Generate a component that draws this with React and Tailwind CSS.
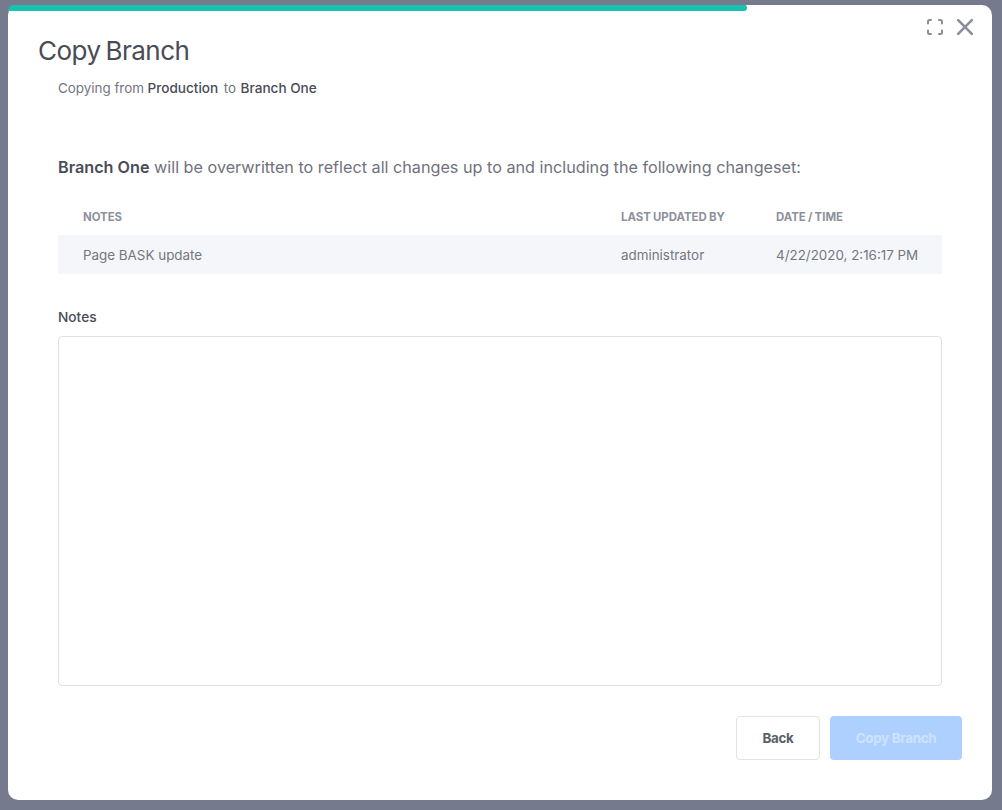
import React from "react";

function ExpandIcon() {
  return (
    <svg width="16" height="16" viewBox="0 0 16 16" fill="none" stroke="#8a8e99" strokeWidth="2" strokeLinecap="round">
      <path d="M1 4.5V2.5A1.5 1.5 0 0 1 2.5 1H4" />
      <path d="M12 1H13.5A1.5 1.5 0 0 1 15 2.5V4.5" />
      <path d="M15 11.5V13.5A1.5 1.5 0 0 1 13.5 15H12" />
      <path d="M4 15H2.5A1.5 1.5 0 0 1 1 13.5V11.5" />
    </svg>
  );
}

function CloseIcon() {
  return (
    <svg width="16" height="16" viewBox="0 0 16 16" fill="none" stroke="#8a8e99" strokeWidth="2.6" strokeLinecap="round">
      <path d="M1.2 1.2L14.8 14.8M14.8 1.2L1.2 14.8" />
    </svg>
  );
}

export default function App() {
  return (
    <div className="w-[1002px] h-[810px] overflow-hidden bg-[#757b8d] pt-[5px] pl-2 font-['Inter',sans-serif]">
      <div className="relative w-[984px] h-[795px] bg-white rounded-[10px] flex flex-col">
        <div className="absolute left-0 top-0 w-[739px] h-[6px] bg-[#17c3ae] rounded-tl-[10px] rounded-r-[4px]" />
        <div className="absolute right-[19px] top-[14px] flex items-center gap-[14px]">
          <ExpandIcon />
          <CloseIcon />
        </div>
        <h1 className="ml-[30px] mt-[29px] text-[26px] leading-[34px] font-normal tracking-[-0.5px] [word-spacing:-2px] text-[#494c55]">Copy Branch</h1>
        <p className="ml-[50px] mt-[10px] text-[13.4px] leading-[20px] text-[#73767f] flex">
          <span>Copying from</span>
          <span className="ml-[3.5px] font-medium text-[13.6px] text-[#494c55]">Production</span>
          <span className="ml-[5.5px]">to</span>
          <span className="ml-[4.5px] font-medium text-[13.6px] text-[#494c55]">Branch One</span>
        </p>
        <p className="ml-[50px] mt-[57px] text-[16.2px] leading-[24px] text-[#6f727c]">
          <span className="font-semibold text-[#494c55]">Branch One</span> will be overwritten to reflect all changes up to and including the following changeset:
        </p>
        <div className="mx-[50px] mt-[20px]">
          <div className="flex h-[36px] pt-[2px] items-center text-[11.4px] font-bold text-[#8d919b] uppercase [word-spacing:-0.5px]">
            <span className="pl-[25px] w-[563px]">Notes</span>
            <span className="w-[155px]">Last updated by</span>
            <span>Date / Time</span>
          </div>
          <div className="flex h-[39px] pt-[1px] items-center bg-[#f5f6fa] text-[13.4px] text-[#73767f]">
            <span className="pl-[25px] w-[563px]">Page BASK update</span>
            <span className="w-[155px]">administrator</span>
            <span>4/22/2020, 2:16:17 PM</span>
          </div>
        </div>
        <label className="ml-[50px] mt-[33px] text-[13.7px] leading-[20px] font-medium text-[#494c55]">Notes</label>
        <textarea className="block mx-[50px] mt-[9px] h-[350px] w-[884px] resize-none rounded-[4px] border border-[#dfe0e3] bg-white" />
        <div className="mt-[30px] mr-[30px] flex justify-end gap-[10px]">
          <button className="w-[84px] h-[44px] rounded-[4px] border border-[#e1e2e5] bg-white text-[13.4px] font-bold tracking-[-0.3px] text-[#5c5f69]">Back</button>
          <button className="w-[132px] h-[44px] rounded-[4px] bg-[#aed0ff] text-[13.4px] font-bold tracking-[-0.3px] text-[#cfe2ff]">Copy Branch</button>
        </div>
      </div>
    </div>
  );
}
